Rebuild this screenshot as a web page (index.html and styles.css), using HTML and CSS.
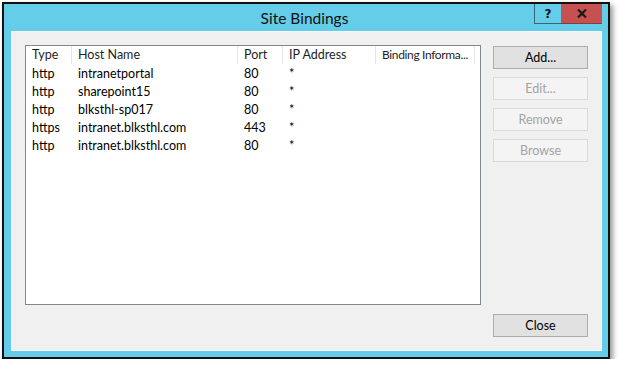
FILE: index.html
```html
<!DOCTYPE html>
<html lang="en">
<head>
  <meta charset="UTF-8" />
  <title>Site Bindings</title>
  <link rel="stylesheet" href="styles.css">
</head>
<body>
  <div class="window">
    <div class="titlebar">
      <div class="title">Site Bindings</div>
      <div class="caption-btn help">?</div>
      <div class="caption-btn close">
        <svg width="10" height="9" viewBox="0 0 10 9"><path d="M1 0.5 L9 8.5 M9 0.5 L1 8.5" stroke="#1a1a1a" stroke-width="2.2"/></svg>
      </div>
    </div>

    <div class="client">
      <div class="list">
        <div class="row header">
          <div class="col c-type">Type</div>
          <div class="col c-host">Host Name</div>
          <div class="col c-port">Port</div>
          <div class="col c-ip">IP Address</div>
          <div class="col c-info">Binding Informa...</div>
        </div>
        <div class="row">
          <div class="col c-type">http</div>
          <div class="col c-host">intranetportal</div>
          <div class="col c-port">80</div>
          <div class="col c-ip">*</div>
          <div class="col c-info"></div>
        </div>
        <div class="row">
          <div class="col c-type">http</div>
          <div class="col c-host">sharepoint15</div>
          <div class="col c-port">80</div>
          <div class="col c-ip">*</div>
          <div class="col c-info"></div>
        </div>
        <div class="row">
          <div class="col c-type">http</div>
          <div class="col c-host">blksthl-sp017</div>
          <div class="col c-port">80</div>
          <div class="col c-ip">*</div>
          <div class="col c-info"></div>
        </div>
        <div class="row">
          <div class="col c-type">https</div>
          <div class="col c-host">intranet.blksthl.com</div>
          <div class="col c-port">443</div>
          <div class="col c-ip">*</div>
          <div class="col c-info"></div>
        </div>
        <div class="row">
          <div class="col c-type">http</div>
          <div class="col c-host">intranet.blksthl.com</div>
          <div class="col c-port">80</div>
          <div class="col c-ip">*</div>
          <div class="col c-info"></div>
        </div>
      </div>

      <div class="actions">
        <button class="btn">Add...</button>
        <button class="btn" disabled>Edit...</button>
        <button class="btn" disabled>Remove</button>
        <button class="btn" disabled>Browse</button>
      </div>

      <button class="btn close-btn">Close</button>
    </div>
  </div>
</body>
</html>
```

FILE: styles.css
```css
body {
  margin: 0;
  background: #fff;
  font-family: Lato, 'Open Sans', sans-serif;
  font-size: 12.5px;
  color: #000;
}

.window {
  box-sizing: border-box;
  margin: 2px 0 0 2px;
  width: 608px;
  height: 357px;
  border: 2px solid #111;
  background: #64cdea;
  box-shadow: 3px 3px 5px rgba(0,0,0,0.4);
  display: flex;
  flex-direction: column;
  padding: 0 6px 6px 7px;
}

.titlebar {
  position: relative;
  height: 27px;
  display: flex;
  justify-content: center;
  align-items: center;
}

.title {
  font-size: 15.5px;
  color: #111;
  margin-left: -4px;
  margin-top: 1px;
}

.caption-btn {
  position: absolute;
  top: 0;
  height: 20px;
  box-sizing: border-box;
  display: flex;
  justify-content: center;
  align-items: center;
}

.help {
  right: 41px;
  width: 27px;
  border-left: 1px solid #3a6579;
  border-bottom: 1px solid #3a6579;
  font-family: 'DejaVu Sans', sans-serif;
  font-weight: bold;
  font-size: 12px;
  color: #111;
}

.close {
  right: 0;
  width: 41px;
  background: #c75050;
  border-bottom: 1px solid #8a3a3a;
}

.client {
  flex: 1;
  background: #f0f0f0;
  border: 1px solid #f9f9f9;
  padding: 13px;
  display: grid;
  grid-template-columns: 456px 95px;
  grid-template-rows: 1fr 23px;
  column-gap: 12px;
  row-gap: 9px;
}

.list {
  grid-row: 1;
  grid-column: 1;
  box-sizing: border-box;
  background: #fff;
  border: 1px solid #828790;
}

.row {
  display: flex;
  height: 18px;
  line-height: 18px;
}

.row.header {
  height: 18px;
  margin-bottom: 1px;
}

.col {
  box-sizing: border-box;
  padding-left: 6px;
  white-space: nowrap;
  overflow: hidden;
}

.header .col {
  border-right: 1px solid #e5e5e5;
  color: #1e1e1e;
}

.header .c-info {
  letter-spacing: -0.35px;
  font-size: 12px;
}

.c-type { width: 46px; }
.c-host { width: 166px; }
.c-port { width: 45px; }
.c-ip { width: 93px; }
.c-info { width: 99px; }

.actions {
  grid-row: 1;
  grid-column: 2;
  display: flex;
  flex-direction: column;
  gap: 8px;
  padding-top: 1px;
}

.btn {
  box-sizing: border-box;
  height: 23px;
  width: 95px;
  background: #e1e1e1;
  border: 1px solid #adadad;
  font-family: Lato, 'Open Sans', sans-serif;
  font-size: 12.5px;
  color: #000;
  padding: 0;
}

.btn:disabled {
  background: #f4f4f4;
  border-color: #d9d9d9;
  color: #a3a3a3;
}

.close-btn {
  grid-row: 2;
  grid-column: 2;
}
```
